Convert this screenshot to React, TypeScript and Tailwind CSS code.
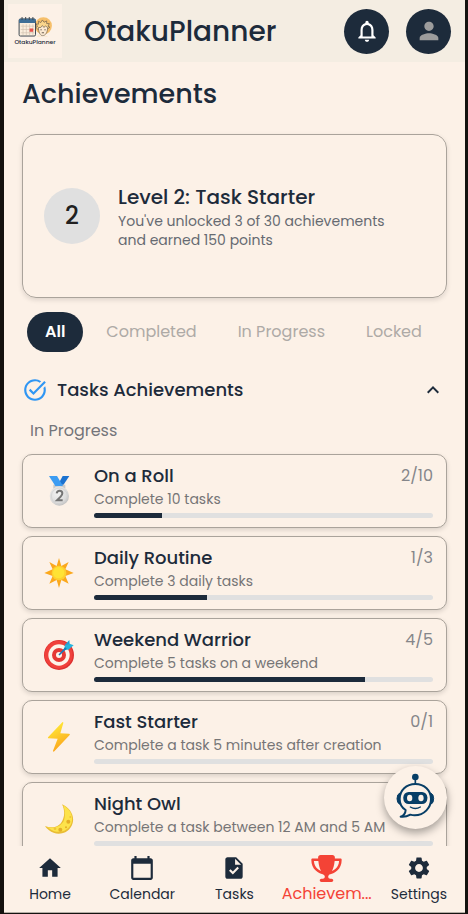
import type { ReactNode } from 'react';
import {
  MdCalendarToday,
  MdHome,
  MdKeyboardArrowUp,
  MdNotificationsNone,
  MdPerson,
  MdSettings,
  MdTask,
  MdTaskAlt,
} from 'react-icons/md';
import { FaTrophy } from 'react-icons/fa6';

function CalendarHeroLogo() {
  return (
    <svg viewBox="0 0 104 64" className="h-[21px] w-[35px]" aria-hidden="true">
      <circle cx="76" cy="27" r="26" fill="#f6bf6a" />
      <path d="M59 38l-6-7 5-2-4-8 7 1 0-9 7 4 5-8 5 7 8-4 0 8 8 0-4 8 6 3-7 5z" fill="#f9d58c" stroke="#6a5a48" strokeWidth="2" />
      <path d="M61 32c0 14 5 25 13 25s15-10 15-25l-7-5-4 5-5-6-5 6z" fill="#fbe9d2" stroke="#6a5a48" strokeWidth="2" />
      <path d="M67 39h4M79 39h4M71 48h7" stroke="#4a4038" strokeWidth="2.5" />
      <path d="M57 58c4-5 9-6 12-1 4 4 9 4 12-1 4 0 7 2 9 5H57z" fill="#fbe9d2" />
      <rect x="2" y="6" width="50" height="52" rx="4" fill="#fbeedd" stroke="#3d4852" strokeWidth="3" />
      <path d="M2 18V9q0-4 4-4h42q4 0 4 4v9z" fill="#3f6f96" />
      <path d="M11 0v9M22 0v9M33 0v9M44 0v9" stroke="#3d4852" strokeWidth="3" />
      <path d="M7 28h41M7 38h41M7 48h41M14 22v33M24 22v33M34 22v33M44 22v33" stroke="#cfc0ae" strokeWidth="2" />
      <rect x="34" y="35" width="11" height="10" fill="#e6504a" />
    </svg>
  );
}

function SilverMedal() {
  return (
    <svg viewBox="0 0 90 90" className="size-[30px]" aria-hidden="true">
      <defs>
        <radialGradient id="silver" cx="0.4" cy="0.35" r="0.7">
          <stop offset="0" stopColor="#f3f3f3" />
          <stop offset="0.7" stopColor="#dcdcdc" />
          <stop offset="1" stopColor="#bdbdbd" />
        </radialGradient>
      </defs>
      <path d="M56 0h20L56 30H40z" fill="#1b72d0" />
      <path d="M28 26h36v12H28z" fill="#c9c9c9" />
      <path d="M15 0h24l18 30H34z" fill="#3c9cf2" />
      <circle cx="46" cy="60" r="29" fill="url(#silver)" />
      <circle cx="46" cy="60" r="24" fill="none" stroke="#cfcfcf" strokeWidth="2" />
      <path d="M38 52q1-8 9-8 8 0 8 8 0 5-5 10l-11 11h17" fill="none" stroke="#757575" strokeWidth="6" />
    </svg>
  );
}

function Sun() {
  return (
    <svg viewBox="0 0 90 90" className="size-[30px]" aria-hidden="true">
      <path
        d="M45 0l7 24 22-12-10 22 25 11-25 9 10 23-22-11-7 24-7-24-22 11 10-23L1 45l25-11-10-22 22 12z"
        fill="#fba81c"
      />
      <circle cx="45" cy="45" r="22" fill="#fdd02f" />
      <circle cx="44" cy="44" r="17" fill="#ffe334" />
    </svg>
  );
}

function Target() {
  return (
    <svg viewBox="0 0 90 90" className="size-[30px]" aria-hidden="true">
      <circle cx="45" cy="45" r="45" fill="#dd3131" />
      <circle cx="44" cy="44" r="42" fill="#f0413c" />
      <circle cx="45" cy="45" r="32" fill="#fdf4ea" />
      <circle cx="45" cy="45" r="21" fill="#e53935" />
      <circle cx="45" cy="45" r="9" fill="#fdf4ea" />
      <path d="M45 45L72 18" stroke="#1976b8" strokeWidth="5" />
      <path d="M62 16L76 0l1 12z" fill="#1c9fd8" />
      <path d="M62 16l15-5 12 5-16 13-11 0z" fill="#25b4dd" />
      <path d="M50 40l13-19 6 6z" fill="#187fbb" />
    </svg>
  );
}

function Bolt() {
  return (
    <svg viewBox="0 0 90 90" className="size-[30px]" aria-hidden="true">
      <defs>
        <linearGradient id="bolt" x1="0" y1="0" x2="0.4" y2="1">
          <stop offset="0.2" stopColor="#ffe634" />
          <stop offset="1" stopColor="#fba51e" />
        </linearGradient>
      </defs>
      <path d="M55 1L12 46q-1 3 2 3l27 1-14 36q0 5 4 2l46-49q2-4-2-4l-26-1L58 3q0-4-3-2z" fill="url(#bolt)" />
    </svg>
  );
}

function Moon() {
  return (
    <svg viewBox="0 0 90 90" className="size-[30px]" aria-hidden="true">
      <path d="M54 1c24 10 38 34 32 56-8 32-47 42-71 22Q6 72 3 66c20 8 43 3 52-16 8-17 7-33-1-49z" fill="#e9bd35" />
      <path d="M57 4c22 12 31 32 26 51-8 28-42 37-65 20l-9-6c22 6 44-2 51-20 5-16 3-32-3-45z" fill="#fde34b" />
      <circle cx="73" cy="53" r="6" fill="#e5ae27" />
      <circle cx="49" cy="77" r="6" fill="#e5ae27" />
      <circle cx="66" cy="70" r="3" fill="#e5ae27" />
      <circle cx="79" cy="39" r="3" fill="#efc33c" />
      <circle cx="33" cy="74" r="4" fill="#efc33c" />
    </svg>
  );
}

function RobotIcon() {
  return (
    <svg viewBox="0 0 120 144" className="h-12 w-10" aria-hidden="true">
      <circle cx="58" cy="12" r="10" fill="#073e66" />
      <path d="M58 18v18" stroke="#073e66" strokeWidth="5" />
      <path d="M12 60q-9 3-9 17t9 17zM104 60q9 3 9 17t-9 17z" fill="#073e66" stroke="#073e66" strokeWidth="3" />
      <path
        d="M29 111C17 104 11 92 11 78 11 52 31 33 58 33s47 19 47 45-20 49-49 49q-7 0-13-2-14 8-29 6 14-5 15-20z"
        fill="#fcf1e7"
        stroke="#073e66"
        strokeWidth="6"
        strokeLinejoin="round"
      />
      <rect x="22" y="57" width="72" height="36" rx="16" fill="#073e66" />
      <ellipse cx="41" cy="75" rx="8" ry="10" fill="#fcf1e7" />
      <ellipse cx="75" cy="75" rx="8" ry="10" fill="#fcf1e7" />
      <path d="M43 102q15 9 30 0" fill="none" stroke="#073e66" strokeWidth="4" strokeLinecap="round" />
    </svg>
  );
}

type Achievement = {
  title: string;
  description: string;
  done: number;
  total: number;
  icon: ReactNode;
};

const achievements: Achievement[] = [
  { title: 'On a Roll', description: 'Complete 10 tasks', done: 2, total: 10, icon: <SilverMedal /> },
  { title: 'Daily Routine', description: 'Complete 3 daily tasks', done: 1, total: 3, icon: <Sun /> },
  { title: 'Weekend Warrior', description: 'Complete 5 tasks on a weekend', done: 4, total: 5, icon: <Target /> },
  { title: 'Fast Starter', description: 'Complete a task 5 minutes after creation', done: 0, total: 1, icon: <Bolt /> },
  { title: 'Night Owl', description: 'Complete a task between 12 AM and 5 AM', done: 0, total: 1, icon: <Moon /> },
];

const filters = ['All', 'Completed', 'In Progress', 'Locked'];

const navItems = [
  { label: 'Home', icon: <MdHome className="size-[26px]" /> },
  { label: 'Calendar', icon: <MdCalendarToday className="size-[26px]" /> },
  { label: 'Tasks', icon: <MdTask className="size-[26px]" /> },
  { label: 'Achievem...', icon: <FaTrophy className="h-[27px] w-[31px]" />, active: true },
  { label: 'Settings', icon: <MdSettings className="size-[26px]" /> },
];

function AchievementCard({ item }: { item: Achievement }) {
  return (
    <li className="flex h-[74px] items-center rounded-[10px] border border-[#aaa39b] bg-[#fcf1e7] pr-[13px] shadow-[0_2px_5px_rgba(0,0,0,0.14)]">
      <div className="flex w-[71px] shrink-0 justify-center">{item.icon}</div>
      <div className="min-w-0 flex-1">
        <div className="flex items-center justify-between">
          <h3 className="text-lg leading-6 font-medium">{item.title}</h3>
          <span className="text-base leading-6 text-[#85868a]">
            {item.done}/{item.total}
          </span>
        </div>
        <p className="text-sm leading-[22px] whitespace-nowrap text-[#767576]">{item.description}</p>
        <div
          role="progressbar"
          aria-label={item.title}
          aria-valuenow={item.done}
          aria-valuemax={item.total}
          className="mt-[3px] h-[5px] overflow-hidden rounded-full bg-[#e0e0e0]"
        >
          <div className="h-full bg-[#1d2b3b]" style={{ width: `${(item.done / item.total) * 100}%` }} />
        </div>
      </div>
    </li>
  );
}

export default function App() {
  return (
    <div className="relative flex h-dvh flex-col border-r-[3px] border-b border-l-4 border-[#14120f] bg-[#fcf1e7] font-[Poppins,Inter,sans-serif] text-[#1d2b3b]">
      <header className="flex h-[62px] shrink-0 items-center bg-[#f4ede2] pr-[14px] pl-1">
        <div className="flex size-[54px] flex-col items-center justify-center bg-[#fcf1e7]">
          <CalendarHeroLogo />
          <span className="text-[6px] leading-2 font-medium">OtakuPlanner</span>
        </div>
        <span className="ml-[22px] flex-1 pt-0.5 text-[28px] leading-9 font-medium">OtakuPlanner</span>
        <div className="flex gap-[17px]">
          <button type="button" aria-label="Notifications" className="flex size-[45px] items-center justify-center rounded-full bg-[#1d2b3b] text-white">
            <MdNotificationsNone className="size-[26px]" />
          </button>
          <button type="button" aria-label="Profile" className="flex size-[45px] items-center justify-center rounded-full bg-[#1d2b3b] text-[#9c9c9c]">
            <MdPerson className="size-7" />
          </button>
        </div>
      </header>

      <main className="min-h-0 flex-1 overflow-hidden px-[18px]">
        <h1 className="mt-3 text-[27px] leading-10 font-medium">Achievements</h1>

        <section className="mt-5 flex h-[164px] items-center gap-[18px] rounded-[14px] border border-[#aaa39b] px-[21px] shadow-[0_2px_5px_rgba(0,0,0,0.12)]">
          <div className="flex size-14 shrink-0 items-center justify-center rounded-full bg-[#e0e0e0] text-2xl font-medium text-[#212121]">
            2
          </div>
          <div>
            <h2 className="text-xl leading-[30px] font-medium">Level 2: Task Starter</h2>
            <p className="text-sm leading-[19px] text-[#666a71]">
              You've unlocked 3 of 30 achievements
              <br />
              and earned 150 points
            </p>
          </div>
        </section>

        <div role="tablist" className="mt-[14px] flex gap-[5px] pl-[5px]">
          {filters.map((name, i) => (
            <button
              key={name}
              type="button"
              role="tab"
              aria-selected={i === 0}
              className={
                i === 0
                  ? 'h-10 rounded-[20px] bg-[#1d2b3b] px-[18px] text-base font-semibold text-white'
                  : 'h-10 px-[18px] text-base whitespace-nowrap text-[#aeaaa6]'
              }
            >
              {name}
            </button>
          ))}
        </div>

        <button type="button" aria-expanded="true" className="mt-6 flex h-7 w-full items-center pr-0.5">
          <MdTaskAlt className="size-[26px] text-[#2f96f3]" />
          <span className="ml-[9px] flex-1 text-left text-lg leading-7 font-medium">Tasks Achievements</span>
          <MdKeyboardArrowUp className="size-6" />
        </button>

        <h2 className="mt-[15px] pl-2 text-base leading-6 text-[#74757a]">In Progress</h2>

        <ul className="mt-[11px] flex flex-col gap-2">
          {achievements.map((item) => (
            <AchievementCard key={item.title} item={item} />
          ))}
        </ul>
      </main>

      <nav className="relative grid h-[67px] shrink-0 grid-cols-5 border-b border-[#b5ada5] bg-[#fcf1e7]">
        {navItems.map((item) => (
          <a
            key={item.label}
            href="#"
            className={
              item.active
                ? 'flex min-w-0 flex-col items-center pt-[9px] text-base leading-6 text-[#f44336]'
                : 'flex min-w-0 flex-col items-center gap-px pt-[9px] text-sm leading-6 text-[#1d2b3b]'
            }
          >
            {item.icon}
            <span className="whitespace-nowrap">{item.label}</span>
          </a>
        ))}
      </nav>

      <button
        type="button"
        aria-label="Open assistant"
        className="absolute right-[18px] bottom-[84px] flex size-[63px] items-center justify-center rounded-full bg-[#fcf1e7] pb-0.5 shadow-[0_4px_9px_rgba(0,0,0,0.35)]"
      >
        <RobotIcon />
      </button>
    </div>
  );
}
